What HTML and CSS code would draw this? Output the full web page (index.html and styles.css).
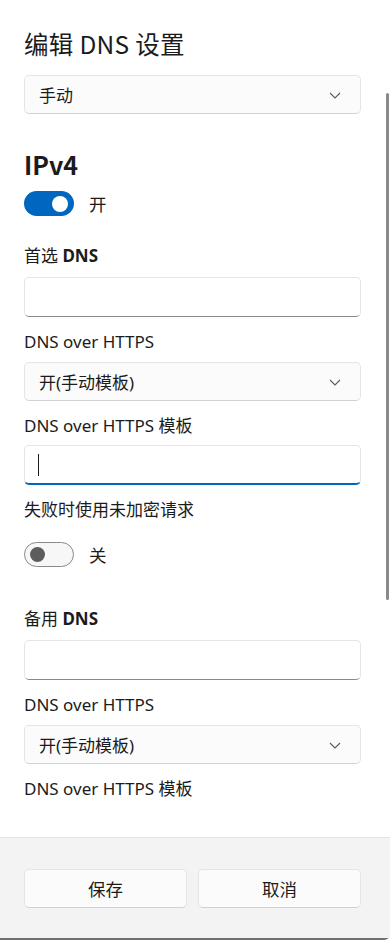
FILE: index.html
```html
<!DOCTYPE html>
<html lang="zh-CN">
<head>
<meta charset="utf-8">
<title>编辑 DNS 设置</title>
<link rel="stylesheet" href="styles.css">
</head>
<body>
<div class="dialog">
  <div class="content">
    <h1 class="title">编辑 DNS 设置</h1>
    <div class="select first">
      <span>手动</span>
      <svg class="chev" width="12" height="7" viewBox="0 0 12 7"><path d="M1 1l5 5 5-5" fill="none" stroke="#5c5c5c" stroke-width="1.1"/></svg>
    </div>

    <h2 class="section">IPv4</h2>
    <div class="toggle-row on-row">
      <span class="toggle on"><span class="knob"></span></span>
      <span class="toggle-text">开</span>
    </div>

    <div class="label strong l1">首选 <b>DNS</b></div>
    <div class="input"></div>

    <div class="label">DNS over HTTPS</div>
    <div class="select">
      <span>开(手动模板)</span>
      <svg class="chev" width="12" height="7" viewBox="0 0 12 7"><path d="M1 1l5 5 5-5" fill="none" stroke="#5c5c5c" stroke-width="1.1"/></svg>
    </div>

    <div class="label">DNS over HTTPS 模板</div>
    <div class="input focused"><span class="caret"></span></div>

    <div class="label">失败时使用未加密请求</div>
    <div class="toggle-row off-row">
      <span class="toggle off"><span class="knob"></span></span>
      <span class="toggle-text">关</span>
    </div>

    <div class="label strong l2">备用 <b>DNS</b></div>
    <div class="input"></div>

    <div class="label">DNS over HTTPS</div>
    <div class="select">
      <span>开(手动模板)</span>
      <svg class="chev" width="12" height="7" viewBox="0 0 12 7"><path d="M1 1l5 5 5-5" fill="none" stroke="#5c5c5c" stroke-width="1.1"/></svg>
    </div>

    <div class="label">DNS over HTTPS 模板</div>
  </div>
  <div class="scrollbar"></div>
  <div class="footer">
    <button class="btn">保存</button>
    <button class="btn">取消</button>
  </div>
</div>
</body>
</html>
```
FILE: styles.css
```css
* { box-sizing: border-box; }
html, body { margin: 0; padding: 0; }
body {
  font-family: "Noto Sans", "Noto Sans CJK SC", sans-serif;
  color: #1b1b1b;
  background: #ffffff;
  width: 390px;
  height: 940px;
  overflow: hidden;
}
.dialog {
  position: relative;
  height: 940px;
  display: flex;
  flex-direction: column;
  border-bottom: 2px solid #6e6e6e;
  border-bottom-right-radius: 6px;
}
.content {
  height: 837px;
  overflow: hidden;
  padding: 28px 29px 0 24px;
  display: flex;
  flex-direction: column;
}
.title {
  margin: 0;
  font-family: "Noto Sans CJK SC", sans-serif;
  font-size: 24.5px;
  line-height: 32px;
  font-weight: 400;
  height: 32px;
  letter-spacing: 0.3px;
}
.select {
  height: 39px;
  border: 1px solid #e5e5e5;
  border-bottom-color: #d2d2d2;
  border-radius: 5px;
  background: #fbfbfb;
  display: flex;
  align-items: center;
  justify-content: space-between;
  padding: 0 19px 0 14px;
  font-size: 17px;
  margin-top: 8px;
}
.select.first { margin-top: 15px; }
.chev { margin-top: 1px; }
.section {
  margin: 34px 0 0;
  font-family: "Noto Sans CJK SC", sans-serif;
  font-size: 25px;
  line-height: 32px;
  font-weight: 600;
  height: 32px;
}
.toggle-row {
  display: flex;
  align-items: center;
  gap: 15px;
  height: 25px;
}
.on-row { margin-top: 11px; }
.off-row { margin-top: 20px; }
.toggle {
  width: 50px;
  height: 25px;
  border-radius: 13px;
  display: flex;
  align-items: center;
  flex-shrink: 0;
}
.toggle.on {
  background: #0067c0;
  justify-content: flex-end;
  padding-right: 6px;
}
.toggle.on .knob {
  width: 16px;
  height: 16px;
  border-radius: 50%;
  background: #ffffff;
}
.toggle.off {
  border: 1px solid #8a8a8a;
  background: #f7f7f7;
  padding-left: 5px;
}
.toggle.off .knob {
  width: 15px;
  height: 15px;
  border-radius: 50%;
  background: #5d5d5d;
}
.toggle-text { font-size: 17.5px; line-height: 24px; }
.label {
  font-size: 17px;
  line-height: 24px;
  height: 24px;
  margin-top: 13px;
}
.label.strong b { font-weight: 700; }
.label.l1 { margin-top: 28px; }
.label.l2 { margin-top: 40px; }
.input {
  height: 40px;
  border: 1px solid #e5e5e5;
  border-bottom-color: #8a8a8a;
  border-radius: 5px;
  background: #ffffff;
  margin-top: 9px;
  display: flex;
  align-items: center;
  padding-left: 13px;
}
.input.focused {
  border-bottom: 2px solid #0067c0;
  margin-top: 7px;
}
.caret {
  width: 1px;
  height: 22px;
  background: #1b1b1b;
  margin-top: 1px;
}
.scrollbar {
  position: absolute;
  left: 386px;
  top: 93px;
  width: 3px;
  height: 507px;
  border-radius: 2px;
  background: #8a8a8a;
}
.footer {
  flex: 1;
  background: #f3f3f3;
  border-top: 1px solid #e5e5e5;
  padding: 31px 29px 0 24px;
  display: grid;
  grid-template-columns: 1fr 1fr;
  column-gap: 11px;
  align-items: start;
}
.btn {
  height: 39px;
  border: 1px solid #e5e5e5;
  border-bottom-color: #d0d0d0;
  border-radius: 5px;
  background: #fbfbfb;
  font-family: "Noto Sans", "Noto Sans CJK SC", sans-serif;
  font-size: 17.5px;
  color: #1b1b1b;
  padding: 0;
}
```
